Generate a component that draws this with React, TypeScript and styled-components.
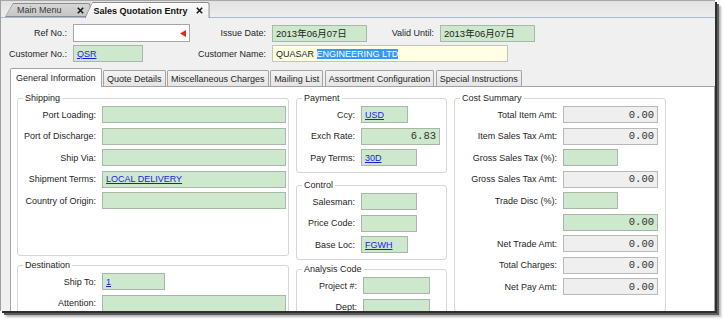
import { FC, ReactNode } from "react";
import styled, { createGlobalStyle } from "styled-components";

const GlobalStyle = createGlobalStyle`
  html, body {
    margin: 0;
    padding: 0;
    background: #ffffff;
  }
  body {
    font-family: "Liberation Sans", Arial, "Noto Sans CJK SC", sans-serif;
    font-size: 9px;
    color: #1e1e1e;
  }
`;

type Tone = "green" | "grey" | "white" | "yellow";

const toneBg: Record<Tone, string> = {
  green: "#cde8cd",
  grey: "#efefef",
  white: "#ffffff",
  yellow: "#ffffe3",
};

const toneBorder: Record<Tone, string> = {
  green: "#a9b7a9",
  grey: "#b9b9b9",
  white: "#a6a6a6",
  yellow: "#c4c4b8",
};

// whole screenshot incl. the drop shadow
const Shot = styled.div`
  width: 723px;
  height: 321px;
  background: #ffffff;
  overflow: hidden;
`;

const Window = styled.div`
  width: 715px;
  height: 311px;
  box-sizing: border-box;
  background: #f0f0f0;
  border-left: 1px solid #a0a0a0;
  box-shadow: 2px 2px 0 #2e2e2e, 4px 4px 0 #5c5c5c, 6px 6px 2px #b4b4b4;
  display: flex;
  flex-direction: column;
  overflow: hidden;
`;

/* ---------- document tabs ---------- */

const DocStrip = styled.div`
  height: 17px;
  flex: none;
  box-sizing: border-box;
  display: flex;
  align-items: flex-end;
  padding-left: 4px;
  border-top: 1px solid #a8a8a8;
  background: linear-gradient(#e2e2e2, #eeeeee);
`;

const DocRule = styled.div`
  height: 1px;
  flex: none;
  background: #a9bccf;
`;

const DocTabShape = styled.div<{ $active?: boolean }>`
  position: relative;
  z-index: ${(p) => (p.$active ? 1 : 0)};
  height: ${(p) => (p.$active ? 16 : 14)}px;
  margin-left: ${(p) => (p.$active ? -6 : 0)}px;
  margin-bottom: ${(p) => (p.$active ? -1 : 0)}px;
  display: flex;
  background: #8c8c8c;
  border-top-right-radius: 3px;
  clip-path: polygon(0 100%, 8px 0, 100% 0, 100% 100%);
`;

const DocTabFace = styled.div<{ $active?: boolean }>`
  flex: 1;
  margin: 1px 1px ${(p) => (p.$active ? 0 : 1)}px 1px;
  display: flex;
  align-items: center;
  gap: ${(p) => (p.$active ? 8 : 15)}px;
  padding: 0 6px 0 ${(p) => (p.$active ? 8 : 11)}px;
  font-weight: ${(p) => (p.$active ? 700 : 400)};
  color: ${(p) => (p.$active ? "#111" : "#3a3a3a")};
  background: ${(p) =>
    p.$active ? "linear-gradient(#fbfbfb, #f0f0f0)" : "linear-gradient(#d6d6d6, #c6c6c6)"};
  border-top-right-radius: 2px;
  clip-path: polygon(0 100%, 7px 0, 100% 0, 100% 100%);
  white-space: nowrap;
`;

const CloseX: FC = () => (
  <svg width="7" height="7" viewBox="0 0 7 7">
    <path d="M0.8 0.8 L6.2 6.2 M6.2 0.8 L0.8 6.2" stroke="#1a1a1a" strokeWidth="1.6" />
  </svg>
);

/* ---------- header fields ---------- */

const Header = styled.div`
  flex: none;
  padding-top: 6px;
  display: flex;
  flex-direction: column;
  gap: 3px;
`;

const HeaderRow = styled.div`
  display: flex;
  align-items: center;
`;

const Label = styled.span<{ $w: number }>`
  flex: none;
  width: ${(p) => p.$w}px;
  box-sizing: border-box;
  padding-right: 6px;
  text-align: right;
  white-space: nowrap;
`;

const Field = styled.div<{ $w: number; $h?: number; $tone?: Tone; $num?: boolean }>`
  flex: none;
  width: ${(p) => p.$w}px;
  height: ${(p) => p.$h ?? 17}px;
  box-sizing: border-box;
  display: flex;
  align-items: center;
  justify-content: ${(p) => (p.$num ? "flex-end" : "flex-start")};
  padding: 0 3px;
  background: ${(p) => toneBg[p.$tone ?? "green"]};
  border: 1px solid ${(p) => toneBorder[p.$tone ?? "green"]};
  font-family: ${(p) =>
    p.$num ? '"Liberation Mono", "Courier New", monospace' : "inherit"};
  font-size: ${(p) => (p.$num ? 10.5 : 9)}px;
  color: ${(p) => (p.$num ? "#333" : "inherit")};
  white-space: nowrap;
  overflow: hidden;
`;

const DateText = styled.span`
  font-size: 9.5px;
  font-family: "Liberation Sans", Arial, "Noto Sans CJK SC", sans-serif;
`;

const Link = styled.span`
  color: #1c1ce0;
  text-decoration: underline;
`;

const Selected = styled.span`
  background: #3399ff;
  color: #ffffff;
`;

const RequiredMark: FC = () => (
  <svg width="6" height="7" viewBox="0 0 6 7" style={{ marginLeft: "auto" }}>
    <polygon points="0,3.5 6,0 6,7" fill="#e3261f" />
  </svg>
);

/* ---------- page tabs ---------- */

const PageTabs = styled.div`
  flex: none;
  display: flex;
  align-items: flex-end;
  gap: 1.5px;
  margin-top: 6px;
  padding-left: 9px;
`;

const PageTab = styled.div<{ $active?: boolean }>`
  position: relative;
  z-index: ${(p) => (p.$active ? 1 : 0)};
  height: ${(p) => (p.$active ? 19 : 16)}px;
  margin-bottom: ${(p) => (p.$active ? -1 : 0)}px;
  box-sizing: border-box;
  padding: 0 ${(p) => (p.$active ? 5 : 3)}px;
  display: flex;
  align-items: center;
  border: 1px solid #a3a3a3;
  border-bottom: none;
  border-radius: 2px 2px 0 0;
  background: ${(p) => (p.$active ? "#ffffff" : "linear-gradient(#f4f4f4, #e4e4e4)")};
  white-space: nowrap;
`;

const Panel = styled.div`
  flex: 1;
  margin: 0 0 0 9px;
  box-sizing: border-box;
  border: 1px solid #a3a3a3;
  border-bottom: none;
  background: #ffffff;
  padding: 6px 6px 0;
  display: flex;
  align-items: flex-start;
  gap: 7px;
  overflow: hidden;
`;

const Column = styled.div<{ $w: number }>`
  flex: none;
  width: ${(p) => p.$w}px;
  display: flex;
  flex-direction: column;
`;

const Group = styled.fieldset<{ $h?: number; $mt?: number; $pb?: number }>`
  margin: ${(p) => p.$mt ?? 0}px 0 0;
  padding: 2px 4px ${(p) => p.$pb ?? 6}px;
  border: 1px solid #d6d6d6;
  border-radius: 3px;
  min-width: 0;
  box-sizing: border-box;
  ${(p) => (p.$h ? `height: ${p.$h}px;` : "")}
`;

const Legend = styled.legend`
  margin-left: 1px;
  padding: 0 2px;
  font-size: 9px;
  line-height: 11px;
  color: #1e1e1e;
`;

const FormGrid = styled.div<{ $label: number }>`
  display: grid;
  grid-template-columns: ${(p) => p.$label}px auto;
  row-gap: 4.5px;
  align-items: center;
  justify-items: start;
`;

const RowLabel = styled.span`
  justify-self: stretch;
  padding-right: 6px;
  text-align: right;
  white-space: nowrap;
`;

interface RowProps {
  label?: string;
  w: number;
  tone?: Tone;
  num?: boolean;
  children?: ReactNode;
}

const Row: FC<RowProps> = ({ label, w, tone, num, children }) => (
  <>
    <RowLabel>{label ? `${label}:` : ""}</RowLabel>
    <Field $w={w} $tone={tone} $num={num}>
      {children}
    </Field>
  </>
);

const pageTabs = [
  "General Information",
  "Quote Details",
  "Miscellaneous Charges",
  "Mailing List",
  "Assortment Configuration",
  "Special Instructions",
];

const App: FC = () => {
  return (
    <Shot>
      <GlobalStyle />
      <Window>
        {/* 文档标签 */}
        <DocStrip>
          <DocTabShape>
            <DocTabFace>
              Main Menu
              <CloseX />
            </DocTabFace>
          </DocTabShape>
          <DocTabShape $active>
            <DocTabFace $active>
              Sales Quotation Entry
              <CloseX />
            </DocTabFace>
          </DocTabShape>
        </DocStrip>
        <DocRule />

        {/* 表头 */}
        <Header>
          <HeaderRow>
            <Label $w={72}>Ref No.:</Label>
            <Field $w={117} $h={18} $tone="white">
              <RequiredMark />
            </Field>
            <Label $w={82}>Issue Date:</Label>
            <Field $w={95}>
              <DateText>2013年06月07日</DateText>
            </Field>
            <Label $w={73}>Valid Until:</Label>
            <Field $w={95}>
              <DateText>2013年06月07日</DateText>
            </Field>
          </HeaderRow>
          <HeaderRow>
            <Label $w={72}>Customer No.:</Label>
            <Field $w={70}>
              <Link>QSR</Link>
            </Field>
            <Label $w={129}>Customer Name:</Label>
            <Field $w={236} $tone="yellow">
              <span>
                QUASAR <Selected>ENGINEERING LTD</Selected>
              </span>
            </Field>
          </HeaderRow>
        </Header>

        {/* 页签 */}
        <PageTabs>
          {pageTabs.map((t, i) => (
            <PageTab key={t} $active={i === 0}>
              {t}
            </PageTab>
          ))}
        </PageTabs>

        <Panel>
          <Column $w={272}>
            <Group $h={163}>
              <Legend>Shipping</Legend>
              <FormGrid $label={80}>
                <Row label="Port Loading" w={184} />
                <Row label="Port of Discharge" w={184} />
                <Row label="Ship Via" w={184} />
                <Row label="Shipment Terms" w={184}>
                  <Link>LOCAL DELIVERY</Link>
                </Row>
                <Row label="Country of Origin" w={184} />
              </FormGrid>
            </Group>
            <Group $mt={4}>
              <Legend>Destination</Legend>
              <FormGrid $label={80}>
                <Row label="Ship To" w={63}>
                  <Link>1</Link>
                </Row>
                <Row label="Attention" w={184} />
              </FormGrid>
            </Group>
          </Column>

          <Column $w={151}>
            <Group>
              <Legend>Payment</Legend>
              <FormGrid $label={60}>
                <Row label="Ccy" w={47}>
                  <Link>USD</Link>
                </Row>
                <Row label="Exch Rate" w={79} num>
                  6.83
                </Row>
                <Row label="Pay Terms" w={56}>
                  <Link>30D</Link>
                </Row>
              </FormGrid>
            </Group>
            <Group $mt={7}>
              <Legend>Control</Legend>
              <FormGrid $label={60}>
                <Row label="Salesman" w={56} />
                <Row label="Price Code" w={56} />
                <Row label="Base Loc" w={47}>
                  <Link>FGWH</Link>
                </Row>
              </FormGrid>
            </Group>
            <Group $mt={4}>
              <Legend>Analysis Code</Legend>
              <FormGrid $label={62}>
                <Row label="Project #" w={67} />
                <Row label="Dept" w={67} />
              </FormGrid>
            </Group>
          </Column>

          <Column $w={212}>
            <Group $pb={16}>
              <Legend>Cost Summary</Legend>
              <FormGrid $label={104}>
                <Row label="Total Item Amt" w={95} tone="grey" num>
                  0.00
                </Row>
                <Row label="Item Sales Tax Amt" w={95} tone="grey" num>
                  0.00
                </Row>
                <Row label="Gross Sales Tax (%)" w={55} />
                <Row label="Gross Sales Tax Amt" w={95} tone="grey" num>
                  0.00
                </Row>
                <Row label="Trade Disc (%)" w={55} />
                <Row w={95} num>
                  0.00
                </Row>
                <Row label="Net Trade Amt" w={95} tone="grey" num>
                  0.00
                </Row>
                <Row label="Total Charges" w={95} tone="grey" num>
                  0.00
                </Row>
                <Row label="Net Pay Amt" w={95} tone="grey" num>
                  0.00
                </Row>
              </FormGrid>
            </Group>
          </Column>
        </Panel>
      </Window>
    </Shot>
  );
};

export default App;
